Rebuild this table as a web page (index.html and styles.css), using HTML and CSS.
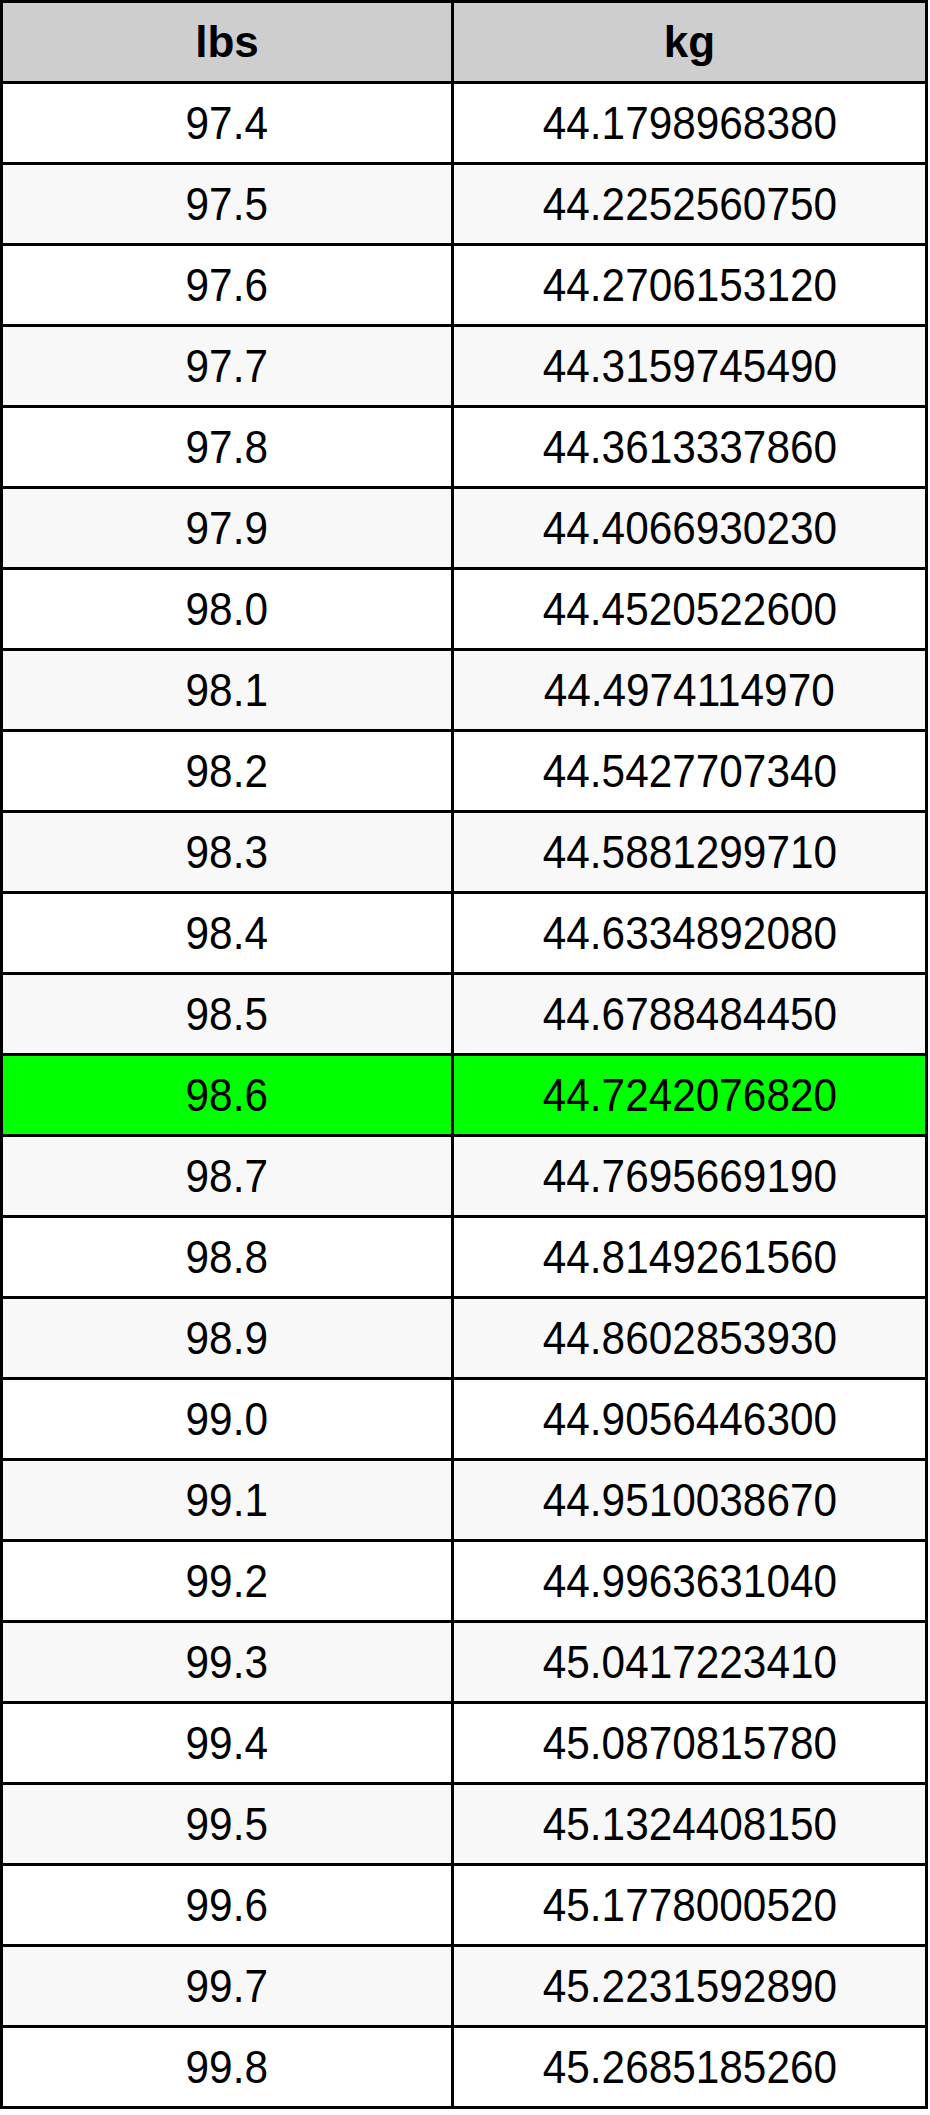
FILE: index.html
```html
<!DOCTYPE html>
<html>
<head>
<meta charset="utf-8">
<link rel="stylesheet" href="styles.css">
</head>
<body>
<table class="conv">
<colgroup><col class="c1"><col class="c2"></colgroup>
<thead>
<tr><th>lbs</th><th>kg</th></tr>
</thead>
<tbody>
<tr><td><span>97.4</span></td><td><span>44.1798968380</span></td></tr>
<tr class="alt"><td><span>97.5</span></td><td><span>44.2252560750</span></td></tr>
<tr><td><span>97.6</span></td><td><span>44.2706153120</span></td></tr>
<tr class="alt"><td><span>97.7</span></td><td><span>44.3159745490</span></td></tr>
<tr><td><span>97.8</span></td><td><span>44.3613337860</span></td></tr>
<tr class="alt"><td><span>97.9</span></td><td><span>44.4066930230</span></td></tr>
<tr><td><span>98.0</span></td><td><span>44.4520522600</span></td></tr>
<tr class="alt"><td><span>98.1</span></td><td><span>44.4974114970</span></td></tr>
<tr><td><span>98.2</span></td><td><span>44.5427707340</span></td></tr>
<tr class="alt"><td><span>98.3</span></td><td><span>44.5881299710</span></td></tr>
<tr><td><span>98.4</span></td><td><span>44.6334892080</span></td></tr>
<tr class="alt"><td><span>98.5</span></td><td><span>44.6788484450</span></td></tr>
<tr class="hl"><td><span>98.6</span></td><td><span>44.7242076820</span></td></tr>
<tr class="alt"><td><span>98.7</span></td><td><span>44.7695669190</span></td></tr>
<tr><td><span>98.8</span></td><td><span>44.8149261560</span></td></tr>
<tr class="alt"><td><span>98.9</span></td><td><span>44.8602853930</span></td></tr>
<tr><td><span>99.0</span></td><td><span>44.9056446300</span></td></tr>
<tr class="alt"><td><span>99.1</span></td><td><span>44.9510038670</span></td></tr>
<tr><td><span>99.2</span></td><td><span>44.9963631040</span></td></tr>
<tr class="alt"><td><span>99.3</span></td><td><span>45.0417223410</span></td></tr>
<tr><td><span>99.4</span></td><td><span>45.0870815780</span></td></tr>
<tr class="alt"><td><span>99.5</span></td><td><span>45.1324408150</span></td></tr>
<tr><td><span>99.6</span></td><td><span>45.1778000520</span></td></tr>
<tr class="alt"><td><span>99.7</span></td><td><span>45.2231592890</span></td></tr>
<tr><td><span>99.8</span></td><td><span>45.2685185260</span></td></tr>
</tbody>
</table>
</body>
</html>
```

FILE: styles.css
```css
html, body {
  margin: 0;
  padding: 0;
  background: #ffffff;
}

.conv {
  border-collapse: separate;
  border-spacing: 0;
  table-layout: fixed;
  width: 928px;
  border-top: 3px solid #000;
  border-left: 3px solid #000;
  font-family: "Liberation Sans", Arial, sans-serif;
  color: #000;
}

.c1 { width: 451px; }
.c2 { width: 474px; }

.conv th,
.conv td {
  border-right: 3px solid #000;
  border-bottom: 3px solid #000;
  padding: 0;
  height: 78px;
  text-align: center;
  vertical-align: middle;
  line-height: 1;
}

.conv th {
  background: #cecece;
  font-weight: bold;
  font-size: 44px;
}

.conv td {
  background: #ffffff;
  font-size: 46px;
}

.conv td span {
  display: inline-block;
  transform: scaleX(0.92);
}

.conv tr.alt td {
  background: #f8f8f8;
}

.conv tr.hl td {
  background: #00ff00;
}
```
